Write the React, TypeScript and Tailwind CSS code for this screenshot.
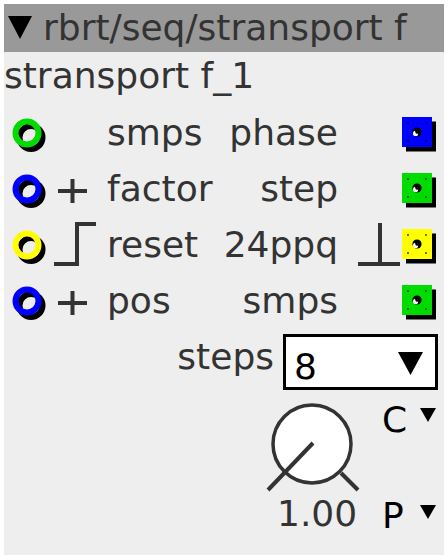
import React from "react";

type PortColor = "green" | "blue" | "yellow";

const fills: Record<PortColor, string> = {
  green: "#00dc00",
  blue: "#0000ff",
  yellow: "#ffff00",
};

function InPort({ color }: { color: PortColor }) {
  return (
    <svg width="40" height="40" viewBox="0 0 40 40" className="shrink-0">
      <circle cx="24" cy="24.5" r="11.5" fill="none" stroke="#000" strokeWidth="6" />
      <circle cx="20" cy="20" r="11.5" fill="none" stroke={fills[color]} strokeWidth="6" />
    </svg>
  );
}

function OutPort({ color }: { color: PortColor }) {
  return (
    <svg width="40" height="40" viewBox="0 0 40 40" className="shrink-0">
      <rect x="6" y="8.5" width="30" height="30" fill="#000" />
      <rect x="2" y="4" width="30" height="30" fill={fills[color]} />
      <g fill="#000" opacity="0.55">
        <rect x="7" y="9" width="2" height="2" />
        <rect x="25" y="9" width="2" height="2" />
        <rect x="7" y="27" width="2" height="2" />
        <rect x="25" y="27" width="2" height="2" />
      </g>
      <circle cx="17" cy="19" r="4.6" fill="#000" />
      <circle cx="15.6" cy="20.4" r="2.6" fill="#fff" />
      <circle cx="17.8" cy="18.2" r="2.6" fill="#000" />
    </svg>
  );
}

function Plus() {
  return (
    <svg width="60" height="56" viewBox="0 0 60 56">
      <line x1="11" y1="30" x2="40" y2="30" stroke="#333" strokeWidth="4" />
      <line x1="25.5" y1="18" x2="25.5" y2="42" stroke="#333" strokeWidth="4" />
    </svg>
  );
}

function RiseEdge() {
  return (
    <svg width="60" height="56" viewBox="0 0 60 56">
      <polyline points="7,47 30,47 30,7 49,7" fill="none" stroke="#333" strokeWidth="4" />
    </svg>
  );
}

function FallEdge() {
  return (
    <svg width="62" height="56" viewBox="0 0 62 56">
      <line x1="42" y1="6" x2="42" y2="47" stroke="#333" strokeWidth="4" />
      <line x1="20" y1="47" x2="62" y2="47" stroke="#333" strokeWidth="4" />
    </svg>
  );
}

function Tri({ w, h }: { w: number; h: number }) {
  return (
    <svg width={w} height={h} viewBox={`0 0 ${w} ${h}`} className="shrink-0">
      <polygon points={`0,0 ${w},0 ${w / 2},${h}`} fill="#000" />
    </svg>
  );
}

interface Row {
  inColor: PortColor;
  sym?: "plus" | "rise";
  left: string;
  right: string;
  outColor: PortColor;
  fall?: boolean;
}

const rows: Row[] = [
  { inColor: "green", left: "smps", right: "phase", outColor: "blue" },
  { inColor: "blue", sym: "plus", left: "factor", right: "step", outColor: "green" },
  { inColor: "yellow", sym: "rise", left: "reset", right: "24ppq", outColor: "yellow", fall: true },
  { inColor: "blue", sym: "plus", left: "pos", right: "smps", outColor: "green" },
];

export default function App() {
  return (
    <div className="p-1 bg-white">
      <div className="w-[440px] h-[551px] bg-[#eeeeee] font-['DejaVu_Sans',sans-serif] text-[36px] text-[#333] overflow-hidden">
        <div className="h-[48px] bg-[#999999] leading-[48px] pl-[4px] flex items-start whitespace-nowrap">
          <div className="mt-[12px] w-[24px] h-[23px]">
            <Tri w={24} h={23} />
          </div>
          <span className="ml-[11px]">rbrt/seq/stransport f</span>
        </div>
        <div className="h-[48px] leading-[48px] whitespace-nowrap">stransport f_1</div>

        <div className="mt-[5px] flex flex-col">
          {rows.map((r, i) => (
            <div key={i} className="h-[56px] leading-[56px] flex items-center whitespace-nowrap">
              <div className="ml-[3px]">
                <InPort color={r.inColor} />
              </div>
              <div className="w-[60px] h-[56px] flex items-center">
                {r.sym === "plus" && <Plus />}
                {r.sym === "rise" && <RiseEdge />}
              </div>
              <div className="flex-1 flex justify-between">
                <span>{r.left}</span>
                <span>{r.right}</span>
              </div>
              <div className="w-[62px] h-[56px]">{r.fall && <FallEdge />}</div>
              <div className="w-[40px] mr-[4px]">
                <OutPort color={r.outColor} />
              </div>
            </div>
          ))}
        </div>

        <div className="mt-[5px] h-[56px] flex justify-end pr-[6px]">
          <span className="leading-[46px] mr-[9px]">steps</span>
          <div className="w-[155px] h-[56px] border-[3px] border-black bg-white flex justify-between text-black">
            <span className="pl-[8px] pt-[10px] leading-[40px]">8</span>
            <div className="mt-[15px] mr-[12px]">
              <Tri w={25} h={23} />
            </div>
          </div>
        </div>

        <div className="mt-[8px] flex justify-end gap-[20px] pr-[4px]">
          <div className="w-[100px] flex flex-col">
            <svg width="100" height="96" viewBox="0 0 100 96">
              <circle cx="50" cy="46" r="39" fill="#fff" stroke="#333" strokeWidth="3.5" />
              <line x1="51" y1="45" x2="6" y2="92" stroke="#333" strokeWidth="4" />
              <line x1="79" y1="75" x2="96" y2="92" stroke="#333" strokeWidth="4" />
            </svg>
            <span className="ml-[15px] leading-[40px] whitespace-nowrap">1.00</span>
          </div>
          <div className="w-[58px] mt-[2px] flex flex-col gap-[56px] text-black">
            <div className="flex items-start h-[40px] leading-[40px]">
              <span className="w-[38px]">C</span>
              <div className="mt-[8px]">
                <Tri w={16} h={14} />
              </div>
            </div>
            <div className="flex items-start h-[40px] leading-[40px]">
              <span className="w-[38px]">P</span>
              <div className="mt-[9px]">
                <Tri w={16} h={14} />
              </div>
            </div>
          </div>
        </div>
      </div>
    </div>
  );
}
